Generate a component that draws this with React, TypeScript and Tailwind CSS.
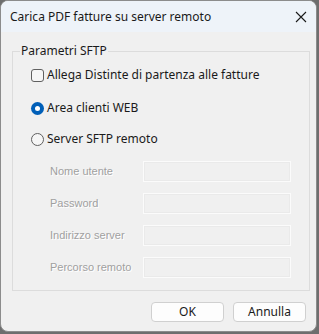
export default function App() {
  const fields = ["Nome utente", "Password", "Indirizzo server", "Percorso remoto"];

  return (
    <div
      className="w-[319px] h-[334px] bg-[#6e6e6e] overflow-hidden"
      style={{ fontFamily: '"Noto Sans", "Open Sans", sans-serif' }}
    >
      <div className="w-[317px] h-[332px] rounded-lg border border-[#8c8c8c] bg-[#f0f0f0] overflow-hidden flex flex-col">
        {/* Title bar */}
        <div className="h-[31px] bg-[#eef3f9] flex items-center justify-between pl-[9px] pr-[9px] shrink-0">
          <span className="text-[12px] text-[#1a1a1a]">Carica PDF fatture su server remoto</span>
          <svg width="12" height="12" viewBox="0 0 12 12">
            <path d="M1 1 L11 11 M11 1 L1 11" stroke="#1a1a1a" strokeWidth="1.1" />
          </svg>
        </div>

        {/* Body */}
        <div className="flex-1 flex flex-col px-[11px] pt-[10px]">
          <fieldset className="border border-[#dcdcdc] h-[249px] px-[18px] m-0 pb-0 pt-0">
            <legend className="text-[12px] text-[#1a1a1a] px-[1px] ml-[-11px]">Parametri SFTP</legend>

            <div className="flex flex-col mt-[7px]">
              <label className="flex items-center gap-[3px] h-[16px]">
                <span className="w-[13px] h-[13px] rounded-[3px] border border-[#606060] bg-[#f6f6f6]" />
                <span className="text-[12px] text-[#1a1a1a]">Allega Distinte di partenza alle fatture</span>
              </label>

              <label className="flex items-center gap-[3px] h-[16px] mt-[17px]">
                <span className="w-[13px] h-[13px] rounded-full bg-[#005fb8] flex items-center justify-center">
                  <span className="w-[5px] h-[5px] rounded-full bg-white" />
                </span>
                <span className="text-[12px] text-[#1a1a1a]">Area clienti WEB</span>
              </label>

              <label className="flex items-center gap-[3px] h-[16px] mt-[15px]">
                <span className="w-[13px] h-[13px] rounded-full border border-[#606060] bg-[#f6f6f6]" />
                <span className="text-[12px] text-[#1a1a1a]">Server SFTP remoto</span>
              </label>

              <div className="flex flex-col gap-[11px] mt-[14px]">
                {fields.map((f) => (
                  <div key={f} className="flex items-center h-[21px]">
                    <span
                      className="w-[112px] shrink-0 pl-[19px] text-[11px] text-[#a0a0a0] whitespace-nowrap"
                      style={{ fontFamily: '"Liberation Sans", Arial, sans-serif', textShadow: "1px 1px 0 #ffffff" }}
                    >
                      {f}
                    </span>
                    <div className="w-[148px] h-[21px] shrink-0 border border-[#fbfbfb] bg-[#f0f0f0] shadow-[inset_0_0_0_1px_#eaeaea]" />
                  </div>
                ))}
              </div>
            </div>
          </fieldset>

          {/* Buttons */}
          <div className="flex justify-end gap-[9px] mt-[11px] mr-[-1px]">
            <button className="w-[73px] h-[20px] rounded-[4px] border border-[#d0d0d0] bg-[#fdfdfd] text-[12px] text-[#1a1a1a] leading-none">
              OK
            </button>
            <button className="w-[73px] h-[20px] rounded-[4px] border border-[#d0d0d0] bg-[#fdfdfd] text-[12px] text-[#1a1a1a] leading-none">
              Annulla
            </button>
          </div>
        </div>
      </div>
    </div>
  );
}
